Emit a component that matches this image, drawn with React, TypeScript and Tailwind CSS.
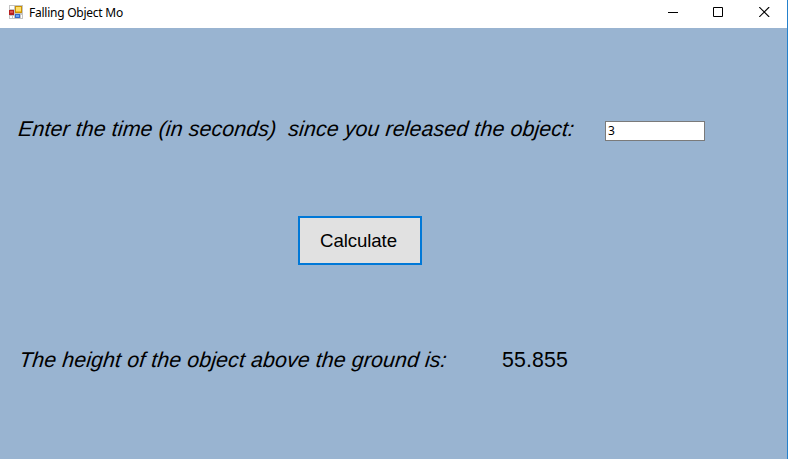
function FormIcon() {
  return (
    <svg width="14" height="14" viewBox="0 0 14 14" shapeRendering="crispEdges">
      <path d="M0 0h14v14H0z" fill="#c4c4c4" />
      <path d="M1 1h4v3H1zM1 11h2v2H1zM4 11h1v2H4zM12 10h1v3h-1z" fill="#fff" />
      <path d="M0 5h5v5H0z" fill="#b51f1f" />
      <path d="M1 6h3v2H1z" fill="#df5148" />
      <path d="M6 1h7v7H6z" fill="#c89108" />
      <path d="M7 2h5v4H7z" fill="#ffdf69" />
      <path d="M7 6h5v1H7z" fill="#f2bd28" />
      <path d="M6 9h5v4H6z" fill="#3269c8" />
      <path d="M7 10h3v2H7z" fill="#6ba5f2" />
    </svg>
  );
}

function TitleBar() {
  return (
    <header className="flex h-7 shrink-0 items-start bg-white">
      <div className="pt-[5px] pl-[9px]"><FormIcon /></div>
      <h1 className="grow whitespace-nowrap pt-[5px] pl-1.5 font-['Noto_Sans',sans-serif] text-[12px] leading-4 tracking-[-0.25px]">
        Falling Object Mo
      </h1>
      <div className="flex gap-[35px] pt-[7px] pr-[17px]">
        <button aria-label="Minimize">
          <svg width="10" height="10" shapeRendering="crispEdges"><path d="M0 5h10v1H0z" /></svg>
        </button>
        <button aria-label="Maximize">
          <svg width="10" height="10"><path d="M.5.5h9v9h-9z" fill="none" stroke="#000" /></svg>
        </button>
        <button aria-label="Close" className="ml-px">
          <svg width="11" height="10"><path d="M.2 0l10 10M10.2 0l-10 10" fill="none" stroke="#000" strokeWidth="1.1" /></svg>
        </button>
      </div>
    </header>
  );
}

export default function App() {
  return (
    <div className="flex h-[459px] w-[788px] flex-col overflow-hidden border-r border-[#2581cc] bg-[#99b4d1] font-['Liberation_Sans',Arial,sans-serif] text-black">
      <TitleBar />
      <main className="flex flex-col items-start">
        <div className="flex pt-[88px] pl-[17px]">
          <label
            htmlFor="seconds"
            className="w-[588px] origin-bottom-left -skew-x-6 whitespace-pre text-[21.33px] leading-[26px] tracking-[0.12px] italic"
          >
            {"Enter the time (in seconds)  since you released the object:"}
          </label>
          <input
            id="seconds"
            defaultValue="3"
            className="mt-[5px] h-5 w-[100px] border border-[#7a7a7a] bg-white px-0.5 pb-0.5 font-['Noto_Sans',sans-serif] text-[12px]"
          />
        </div>
        <button className="mt-[74px] ml-[298px] h-[49px] w-[124px] border-2 border-[#0078d7] bg-[#e1e1e1] pr-[3px] text-[18.67px] tracking-[-0.1px]">
          Calculate
        </button>
        <div className="mt-[82px] flex pl-[18px] text-[21.33px] leading-[26px] tracking-[0.12px]">
          <p className="w-[484px] origin-bottom-left -skew-x-6 whitespace-pre italic">
            The height of the object above the ground is:
          </p>
          <output>55.855</output>
        </div>
      </main>
    </div>
  );
}
